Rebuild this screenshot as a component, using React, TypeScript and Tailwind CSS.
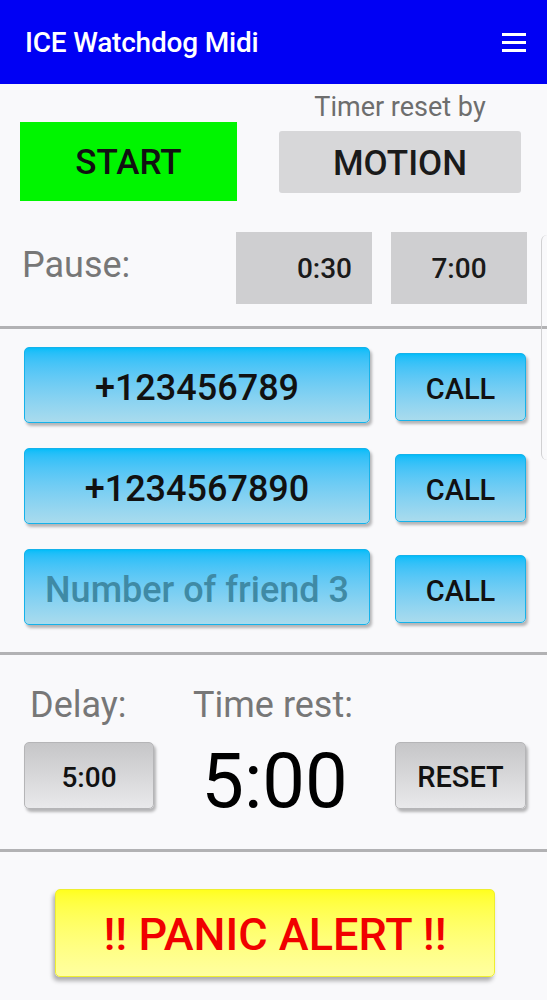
import React from 'react';

const phones = [
  { value: '+123456789', placeholder: 'Number of friend 1' },
  { value: '+1234567890', placeholder: 'Number of friend 2' },
  { value: '', placeholder: 'Number of friend 3' },
];

export default function App() {
  return (
    <div className="relative w-[547px] h-[1000px] overflow-hidden bg-[#f9f9fb] font-['Roboto',sans-serif]">
      {/* app bar */}
      <div className="h-[84px] bg-[#0000f4] flex items-center justify-between pl-[25px] pr-[21px]">
        <span className="text-white text-[28px] font-medium tracking-[-0.2px] pt-[2px]">ICE Watchdog Midi</span>
        <div className="flex flex-col gap-[5px] w-[24px]">
          <div className="h-[3px] bg-white" />
          <div className="h-[3px] bg-white" />
          <div className="h-[3px] bg-white" />
        </div>
      </div>

      {/* start / motion */}
      <div className="flex">
        <div className="ml-[20px] mt-[38px] w-[217px] h-[79px] bg-[#00f500] flex items-center justify-center pt-[4px] text-[35px] font-medium text-[#111]">
          START
        </div>
        <div className="ml-[42px] w-[242px] flex flex-col items-center">
          <div className="mt-[8px] h-[30px] leading-[30px] text-[27px] text-[#6e6e6e]">Timer reset by</div>
          <div className="mt-[9px] w-[242px] h-[62px] rounded-[3px] bg-[#d7d7d9] flex items-center justify-center pt-[4px] text-[35px] font-medium text-[#1a1a1a]">
            MOTION
          </div>
        </div>
      </div>

      {/* pause */}
      <div className="flex items-center mt-[31px]">
        <div className="ml-[22px] flex-1 text-[36px] text-[#777] -mt-[6px]">Pause:</div>
        <div className="w-[136px] h-[72px] bg-[#cfcfd1] flex items-center justify-end pr-[20px] pt-[2px] text-[28px] font-medium text-[#1a1a1a]">0:30</div>
        <div className="ml-[19px] mr-[20px] w-[136px] h-[72px] bg-[#cfcfd1] flex items-center justify-center pt-[2px] text-[28px] font-medium text-[#1a1a1a]">7:00</div>
      </div>

      <div className="mt-[22px] h-[3px] bg-[#b2b2b4]" />

      {/* phone numbers */}
      <div className="pt-[18px] flex flex-col gap-[25px]">
        {phones.map((p, i) => (
          <div key={i} className="flex items-center">
            <div className="ml-[24px] w-[346px] h-[76px] rounded-[5px] border border-[#15b2ea] bg-gradient-to-b from-[#00bdf9] to-[#a9dbed] shadow-[2px_3px_3px_rgba(0,0,0,0.28)] flex items-center justify-center pt-[6px] text-[36px] font-medium">
              {p.value ? (
                <span className="text-[#111]">{p.value}</span>
              ) : (
                <span className="text-[#3f8aa5]">{p.placeholder}</span>
              )}
            </div>
            <div className="ml-[25px] mt-[4px] w-[131px] h-[68px] rounded-[5px] border border-[#15b2ea] bg-gradient-to-b from-[#00bdf9] to-[#a9dbed] shadow-[2px_3px_3px_rgba(0,0,0,0.28)] flex items-center justify-center pt-[6px] text-[29px] font-medium text-[#111]">
              CALL
            </div>
          </div>
        ))}
      </div>

      <div className="mt-[27px] h-[3px] bg-[#b2b2b4]" />

      {/* delay / time rest */}
      <div className="grid grid-cols-[130px_241px_131px] ml-[24px] mt-[30px]">
        <div className="pl-[6px] text-[36px] text-[#777] leading-[40px]">Delay:</div>
        <div className="text-center text-[36px] text-[#777] leading-[40px] pr-[3px]">Time rest:</div>
        <div />
        <div className="mt-[17px] h-[67px] rounded-[5px] border border-[#b5b5b7] bg-gradient-to-b from-[#c6c6c8] to-[#e9e9eb] shadow-[2px_3px_3px_rgba(0,0,0,0.28)] flex items-center justify-center pt-[4px] text-[28px] font-medium text-[#111]">
          5:00
        </div>
        <div className="mt-[17px] h-[67px] flex items-end justify-center">
          <span className="text-[76px] leading-[76px] text-black -mb-[10px]">5:00</span>
        </div>
        <div className="mt-[17px] h-[67px] rounded-[5px] border border-[#b5b5b7] bg-gradient-to-b from-[#c6c6c8] to-[#e9e9eb] shadow-[2px_3px_3px_rgba(0,0,0,0.28)] flex items-center justify-center pt-[4px] text-[29px] font-medium text-[#111]">
          RESET
        </div>
      </div>

      <div className="mt-[40px] h-[3px] bg-[#b2b2b4]" />

      {/* panic */}
      <div className="mt-[37px] ml-[55px] w-[440px] h-[88px] rounded-[5px] border border-[#eeee30] bg-gradient-to-b from-[#ffff1c] to-[#ffffa0] shadow-[-2px_4px_4px_rgba(0,0,0,0.3)] flex items-center justify-center pt-[4px] text-[45px] font-medium text-[#f00000]">
        !! PANIC ALERT !!
      </div>

      {/* edge glow on the right */}
      <div className="absolute right-0 top-[235px] h-[225px] w-[6px] rounded-l-[8px] border-l border-[#d0d0d2]" />
    </div>
  );
}
